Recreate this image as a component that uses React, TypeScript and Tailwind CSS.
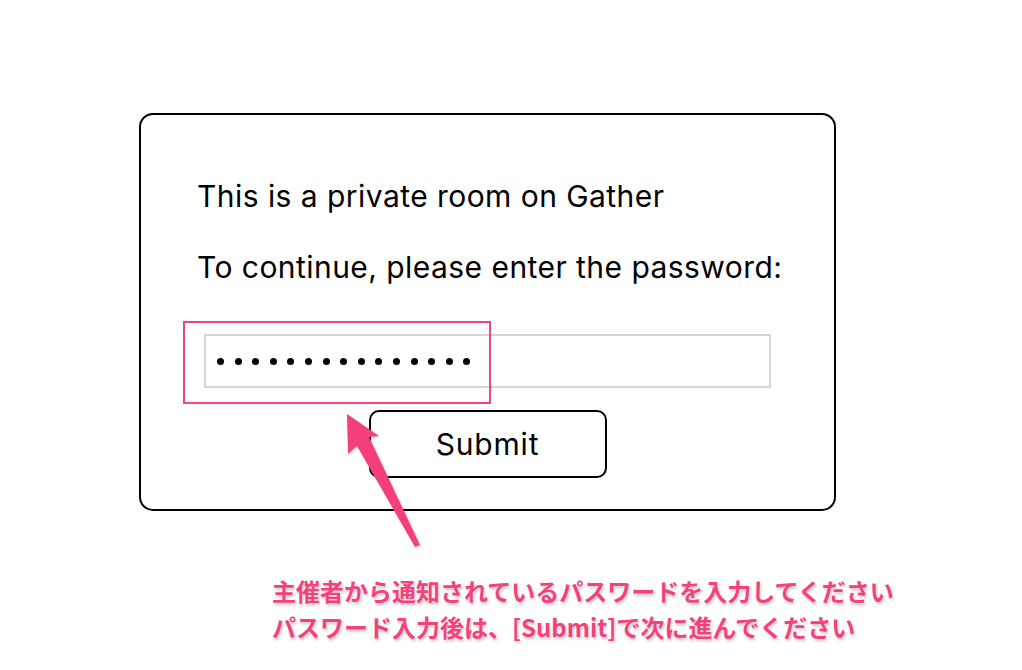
import React from "react";

export default function App() {
  const dots = Array.from({ length: 15 });
  return (
    <div className="relative w-[1022px] h-[670px] bg-white overflow-hidden" style={{ fontFamily: "Inter, 'Noto Sans', sans-serif" }}>
      <div className="pt-[113px] pl-[139px]">
        <div className="w-[697px] h-[398px] border-[2.5px] border-black rounded-[14px] flex flex-col">
          <div className="pl-[56px] pt-[61px] text-[30px] leading-[40px] text-black tracking-[0.45px]">
            <p>This is a private room on Gather</p>
            <p className="mt-[31px]">To continue, please enter the password:</p>
          </div>
          <div className="ml-[63px] mt-[47px] w-[567px] h-[54px] border-2 border-[#d6d6d6] flex items-center pl-[11px] gap-[10.6px]">
            {dots.map((_, i) => (
              <span key={i} className="block w-[7px] h-[7px] rounded-full bg-black" />
            ))}
          </div>
          <div className="flex justify-center mt-[22px]">
            <button className="w-[238px] h-[68px] border-2 border-black rounded-[10px] text-[30px] tracking-[0.8px] text-black bg-white">
              Submit
            </button>
          </div>
        </div>
      </div>

      <div className="absolute left-[183px] top-[321px] w-[308px] h-[83px] border-2 border-[#f0457e]" />

      <svg className="absolute left-0 top-0" width="1022" height="670" viewBox="0 0 1022 670">
        <defs>
          <filter id="sh" x="-20%" y="-20%" width="140%" height="140%">
            <feDropShadow dx="1" dy="1" stdDeviation="1.2" floodColor="#000" floodOpacity="0.2" />
          </filter>
        </defs>
        <polygon
          points="347,414 379,436 369,437 420,545 415,547 357,446 348,454"
          fill="#f43f7a"
          filter="url(#sh)"
        />
      </svg>

      <div
        className="absolute left-[272px] top-[573px] text-[24px] leading-[36px] font-bold text-[#f2417b]"
        style={{
          fontFamily: "'Noto Sans CJK JP', sans-serif",
          textShadow: "0 0 2px #fff, 1px 2px 3px rgba(0,0,0,0.25)",
        }}
      >
        <p>主催者から通知されているパスワードを入力してください</p>
        <p>パスワード入力後は、[Submit]で次に進んでください</p>
      </div>
    </div>
  );
}
